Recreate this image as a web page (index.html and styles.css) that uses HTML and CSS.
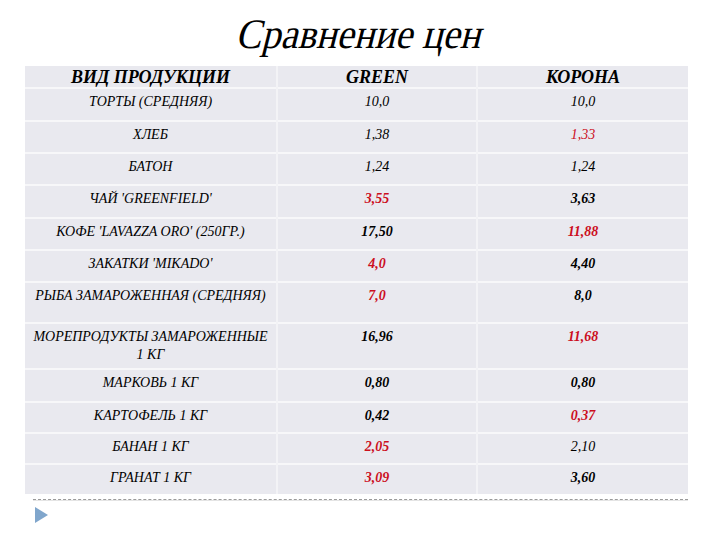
FILE: index.html
```html
<!DOCTYPE html>
<html lang="ru">
<head>
<meta charset="utf-8">
<link rel="stylesheet" href="styles.css">
</head>
<body>
<div class="slide">
  <h1 class="title"><span class="slant">Сравнение цен</span></h1>
  <table class="prices">
    <colgroup><col class="c1"><col class="c2"><col class="c3"></colgroup>
    <tr class="head h22"><th>ВИД ПРОДУКЦИИ</th><th>GREEN</th><th>КОРОНА</th></tr>
    <tr class="h33"><td>ТОРТЫ (СРЕДНЯЯ)</td><td class="n">10,0</td><td class="n">10,0</td></tr>
    <tr class="h32"><td>ХЛЕБ</td><td class="n">1,38</td><td class="n red">1,33</td></tr>
    <tr class="h32"><td>БАТОН</td><td class="n">1,24</td><td class="n">1,24</td></tr>
    <tr class="h33"><td>ЧАЙ 'GREENFIELD'</td><td class="n b red">3,55</td><td class="n b">3,63</td></tr>
    <tr class="h32"><td>КОФЕ 'LAVAZZA ORO' (250ГР.)</td><td class="n b">17,50</td><td class="n b red">11,88</td></tr>
    <tr class="h32"><td>ЗАКАТКИ 'MIKADO'</td><td class="n b red">4,0</td><td class="n b">4,40</td></tr>
    <tr class="h41"><td>РЫБА ЗАМАРОЖЕННАЯ (СРЕДНЯЯ)</td><td class="n b red">7,0</td><td class="n b">8,0</td></tr>
    <tr class="h46"><td>МОРЕПРОДУКТЫ ЗАМАРОЖЕННЫЕ<br>1 КГ</td><td class="n b">16,96</td><td class="n b red">11,68</td></tr>
    <tr class="h33"><td>МАРКОВЬ 1 КГ</td><td class="n b">0,80</td><td class="n b">0,80</td></tr>
    <tr class="h31"><td>КАРТОФЕЛЬ 1 КГ</td><td class="n b">0,42</td><td class="n b red">0,37</td></tr>
    <tr class="h31"><td>БАНАН 1 КГ</td><td class="n b red">2,05</td><td class="n">2,10</td></tr>
    <tr class="h30"><td>ГРАНАТ 1 КГ</td><td class="n b red">3,09</td><td class="n b">3,60</td></tr>
  </table>
  <div class="rule"></div>
  <div class="bullet">
    <svg width="13" height="16" viewBox="0 0 13 16"><polygon points="0,0 13,8 0,16" fill="#80a6cc"/></svg>
  </div>
</div>
</body>
</html>
```

FILE: styles.css
```css
html, body {
  margin: 0;
  padding: 0;
  background: #ffffff;
}
.slide {
  width: 720px;
  height: 540px;
  padding: 0 32px 0 25px;
  box-sizing: border-box;
  font-family: serif;
  color: #000;
}
.title {
  margin: 0;
  padding-top: 12px;
  height: 66px;
  box-sizing: border-box;
  text-align: center;
  font-family: "Liberation Serif", serif;
  font-weight: normal;
  font-style: normal;
  font-size: 42px;
  line-height: 44px;
  padding-left: 9px;
}
.slant {
  display: inline-block;
  transform: skewX(-14deg) scaleX(0.92);
}
.prices {
  width: 663px;
  border-collapse: collapse;
  background: #e9e9ef;
  table-layout: fixed;
}
.c1 { width: 252px; }
.c2 { width: 200px; }
.c3 { width: 211px; }
.prices th, .prices td {
  padding: 3px 4px 0;
  vertical-align: top;
  text-align: center;
  font-style: italic;
  border-top: 2px solid #f7f7f9;
  border-left: 2px solid #f3f3f6;
}
.prices tr:first-child th { border-top: none; }
.prices th:first-child, .prices td:first-child { border-left: none; }
.prices th {
  font-family: "Liberation Serif", serif;
  font-size: 18px;
  font-weight: bold;
  line-height: 18px;
  padding-top: 2px;
}
.prices td {
  font-family: serif;
  font-size: 14px;
  line-height: 18px;
  padding-top: 4px;
}
.prices td.n { font-size: 14px; }
.prices td.b { font-family: "Liberation Serif", serif; font-weight: bold; }
.prices td.red { color: #cc0f1e; }
.h22 { height: 22px; }
.h30 { height: 30px; }
.h31 { height: 31px; }
.h32 { height: 32px; }
.h33 { height: 33px; }
.h41 { height: 41px; }
.h46 { height: 46px; }
.rule {
  margin: 5px 0 0 8px;
  width: 655px;
  border-top: 1px dashed #9a9a9a;
  border-bottom: 1px solid #e4e4e4;
}
.bullet {
  margin: 6px 0 0 10px;
  height: 16px;
}
.bullet svg { display: block; }
```
